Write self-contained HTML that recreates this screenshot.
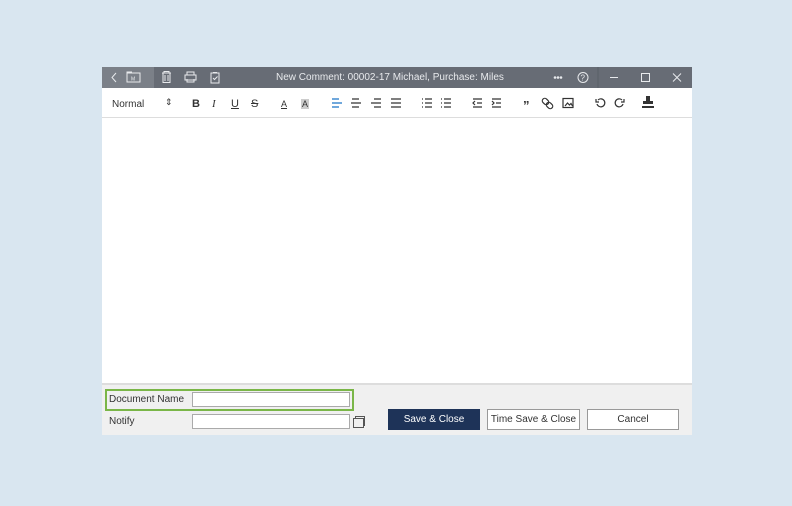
<!DOCTYPE html>
<html><head><meta charset="utf-8"><style>
*{margin:0;padding:0;box-sizing:border-box}
body{width:792px;height:506px;background:#d9e6f0;position:relative;font-family:"Liberation Sans",sans-serif;overflow:hidden}
.win{position:absolute;left:102px;top:67px;width:590px;height:368px;background:#fff}
.tb{position:absolute;left:0;top:0;width:590px;height:21px;background:#676c75}
.tbl{position:absolute;left:0;top:0;width:52px;height:21px;background:#7b8088}
.t{position:absolute;color:#e8eaed;font-size:10px;top:5px}
.tool{position:absolute;left:0;top:21px;width:590px;height:30px;border-bottom:1px solid #ddd}
.i{position:absolute;top:10px;font-size:11px;color:#333}
svg{position:absolute}
.foot{position:absolute;left:0;top:316px;width:590px;height:52px;background:#f0f0f0;border-top:2px solid #ddd}
.lbl{position:absolute;font-size:10px;color:#333}
.inp{position:absolute;background:#fff;border:1px solid #aaa;height:15px}
.btn{position:absolute;height:21px;font-size:10px;text-align:center;line-height:19px;border:1px solid #999;background:#fff;color:#333}
</style></head><body>
<div class="win">
 <div class="tb">
  <div class="tbl"></div>
  <svg width="590" height="21" style="left:0;top:0" fill="none" stroke="#e8eaed" stroke-width="1">
   <path d="M14 6 L10 10.5 L14 15"/>
   <rect x="25" y="6" width="13" height="9"/><path d="M25 6 v-1 h5"/><text x="29" y="13.5" font-size="5" fill="#e8eaed" stroke="none">M</text>
   <path d="M60 6h9M62 6v-1.5h5V6M61 6.5v9h7v-9M63 8v6M66 8v6"/>
   <rect x="83" y="8" width="11" height="5"/><path d="M85 8V5h7v3M85 12v3h7v-3"/>
   <rect x="109" y="6" width="8" height="10"/><path d="M111 5.5h4M111 11l1.5 1.5 3-3"/>
   <circle cx="453" cy="10.5" r="0.8" fill="#e8eaed"/><circle cx="456" cy="10.5" r="0.8" fill="#e8eaed"/><circle cx="459" cy="10.5" r="0.8" fill="#e8eaed"/>
   <circle cx="481" cy="10.5" r="5"/><text x="478.5" y="13.5" font-size="8" fill="#e8eaed" stroke="none">?</text>
   <path d="M496 0v21" stroke="#5a5f67"/>
   <path d="M508 10.5h8"/>
   <rect x="539.5" y="6.5" width="8" height="8"/>
   <path d="M571 6.5l8 8M579 6.5l-8 8"/>
  </svg>
  <div class="t" style="left:174px">New Comment: 00002-17 Michael, Purchase: Miles</div>
 </div>
 <div class="tool">
  <div class="i" style="left:10px;font-size:10px;top:11px">Normal</div>
  <div class="i" style="left:63px;font-size:9px;top:9px">⇕</div>
  <div class="i" style="left:90px;font-weight:bold">B</div>
  <div class="i" style="left:110px;font-style:italic;font-family:'Liberation Serif',serif">I</div>
  <div class="i" style="left:129px;text-decoration:underline">U</div>
  <div class="i" style="left:149px;text-decoration:line-through">S</div>
  <div class="i" style="left:179px;font-size:9px;text-decoration:underline;top:11px">A</div>
  <div class="i" style="left:199px;font-size:9px;background:#ccc;line-height:10px;top:11px;padding:0 1px">A</div>
  <svg width="590" height="30" style="left:0;top:0" fill="none" stroke-width="1.2">
   <g stroke="#1a73c8"><path d="M230 11h7M230 15h10M230 19h7"/></g>
   <g stroke="#333">
    <path d="M250 11h7M249 15h10M250 19h7"/>
    <path d="M272 11h7M269 15h10M272 19h7"/>
    <path d="M289 11h10M289 15h10M289 19h10"/>
    <path d="M323 11h7M323 15h7M323 19h7M320 11h1M320 15h1M320 19h1"/>
    <path d="M342 11h7M342 15h7M342 19h7M339 11h1M339 15h1M339 19h1"/>
    <path d="M371 11h9M375 15h5M371 19h9M373 13l-2 2 2 2"/>
    <path d="M390 11h9M394 15h5M390 19h9M390 13l2 2-2 2"/>
    <rect x="441" y="10" width="5" height="7" rx="2.5" transform="rotate(-45 443.5 13.5)"/>
    <rect x="445" y="14" width="5" height="7" rx="2.5" transform="rotate(-45 447.5 17.5)"/>
    <rect x="461" y="10.5" width="10" height="9"/><path d="M463 18l2.5-3 2 2 1.5-1.5 1.5 2.5"/>
    <path d="M496 12a4 4 0 1 1 -1 4M494 11v3h3"/>
    <path d="M520 12a4 4 0 1 0 1 4M522 11v3h-3"/>
   </g>
   <text x="421" y="22" font-size="13" font-weight="bold" fill="#333">”</text>
   <path d="M544 8h4v5h3v3h-10v-3h3z M540 18h12v2h-12z" fill="#333"/>
  </svg>
 </div>
 <div class="foot">
  <div style="position:absolute;left:3px;top:4px;width:249px;height:22px;border:2px solid #7ab648"></div>
  <div class="lbl" style="left:7px;top:9px">Document Name</div>
  <div class="inp" style="left:90px;top:7px;width:158px"></div>
  <div class="lbl" style="left:7px;top:31px">Notify</div>
  <div class="inp" style="left:90px;top:29px;width:158px"></div>
  <svg width="14" height="14" style="left:250px;top:30px" fill="none" stroke="#555"><rect x="1.5" y="3.5" width="10" height="9"/><path d="M3.5 3.5v-2h9v9h-1"/></svg>
  <div class="btn" style="left:286px;top:24px;width:92px;background:#1e3358;color:#fff;border-color:#1e3358">Save &amp; Close</div>
  <div class="btn" style="left:385px;top:24px;width:93px">Time Save &amp; Close</div>
  <div class="btn" style="left:485px;top:24px;width:92px">Cancel</div>
 </div>
</div>
</body></html>
